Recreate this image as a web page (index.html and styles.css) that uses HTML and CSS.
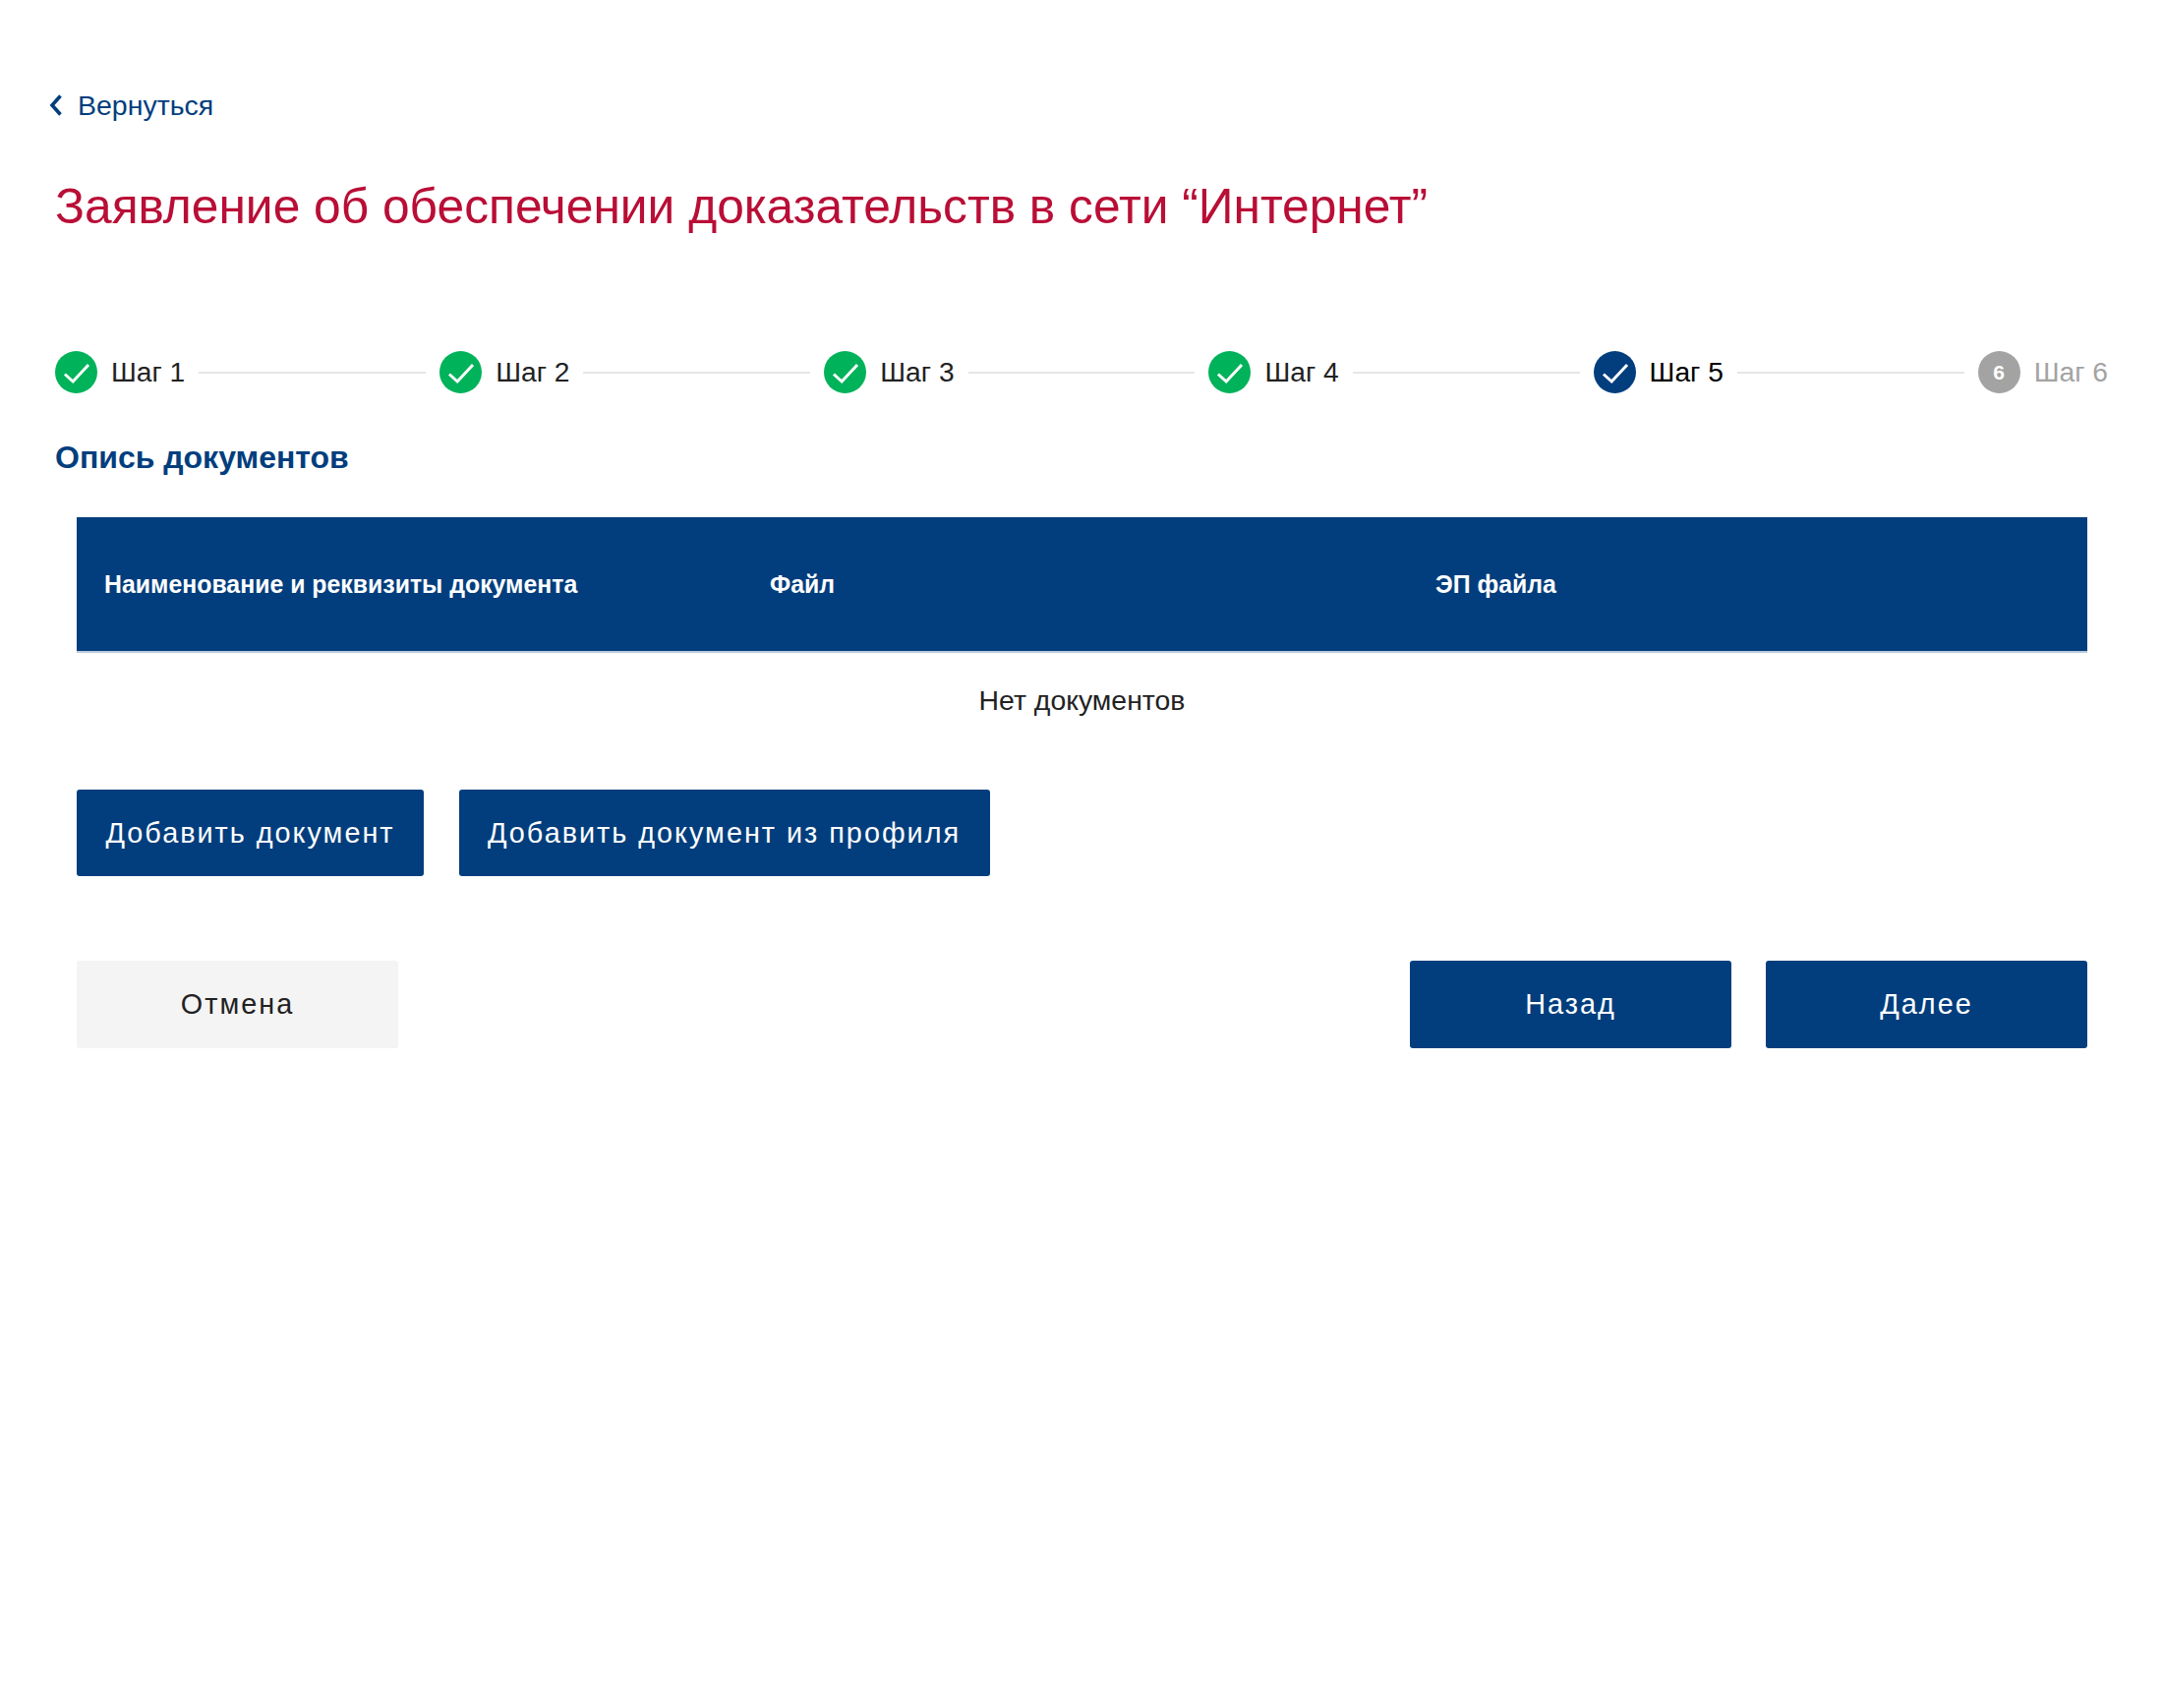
FILE: index.html
```html
<!DOCTYPE html>
<html lang="ru">
<head>
<meta charset="utf-8">
<title>Заявление об обеспечении доказательств</title>
<link rel="stylesheet" href="styles.css">
</head>
<body>
<main class="page">
  <a class="back" href="#">
    <svg class="back-icon" viewBox="0 0 14 22" width="14" height="22"><path d="M11.5 1.5 L3 11 L11.5 20.5" fill="none" stroke="currentColor" stroke-width="3.6"/></svg>
    <span>Вернуться</span>
  </a>
  <h1 class="title">Заявление об обеспечении доказательств в сети “Интернет”</h1>
  <ol class="steps">
    <li class="step done"><span class="dot"><svg viewBox="0 0 43 43" width="43" height="43"><path d="M10 23.5 L18.2 31 L34 14" fill="none" stroke="#fff" stroke-width="3"/></svg></span><span class="label">Шаг 1</span></li>
    <li class="line"></li>
    <li class="step done"><span class="dot"><svg viewBox="0 0 43 43" width="43" height="43"><path d="M10 23.5 L18.2 31 L34 14" fill="none" stroke="#fff" stroke-width="3"/></svg></span><span class="label">Шаг 2</span></li>
    <li class="line"></li>
    <li class="step done"><span class="dot"><svg viewBox="0 0 43 43" width="43" height="43"><path d="M10 23.5 L18.2 31 L34 14" fill="none" stroke="#fff" stroke-width="3"/></svg></span><span class="label">Шаг 3</span></li>
    <li class="line"></li>
    <li class="step done"><span class="dot"><svg viewBox="0 0 43 43" width="43" height="43"><path d="M10 23.5 L18.2 31 L34 14" fill="none" stroke="#fff" stroke-width="3"/></svg></span><span class="label">Шаг 4</span></li>
    <li class="line"></li>
    <li class="step current"><span class="dot"><svg viewBox="0 0 43 43" width="43" height="43"><path d="M10 23.5 L18.2 31 L34 14" fill="none" stroke="#fff" stroke-width="3"/></svg></span><span class="label">Шаг 5</span></li>
    <li class="line"></li>
    <li class="step todo"><span class="dot">6</span><span class="label">Шаг 6</span></li>
  </ol>
  <h2 class="subtitle">Опись документов</h2>
  <section class="content">
    <div class="thead">
      <div class="th">Наименование и реквизиты документа</div>
      <div class="th">Файл</div>
      <div class="th">ЭП файла</div>
    </div>
    <p class="empty">Нет документов</p>
    <div class="add-actions">
      <button class="btn primary" type="button">Добавить документ</button>
      <button class="btn primary" type="button">Добавить документ из профиля</button>
    </div>
    <div class="nav-actions">
      <button class="btn nav secondary" type="button">Отмена</button>
      <div class="nav-right">
        <button class="btn nav primary" type="button">Назад</button>
        <button class="btn nav primary" type="button">Далее</button>
      </div>
    </div>
  </section>
</main>
</body>
</html>
```
FILE: styles.css
```css
* { box-sizing: border-box; }
html, body { margin: 0; background: #fff; }
body { font-family: "Liberation Sans", Arial, sans-serif; color: #222; }
.page { padding: 90px 56px 0; min-height: 1737px; }

.back { display: flex; align-items: center; gap: 15px; color: #023e7d; text-decoration: none; font-size: 28.5px; line-height: 34px; margin-left: -6px; }
.back-icon { flex: none; }

.title { margin: 55px 0 0; font-size: 49.7px; line-height: 62px; font-weight: 400; color: #b90e36; }

.steps { list-style: none; display: flex; align-items: center; margin: 116px 0 0; padding: 0; }
.step { display: flex; align-items: center; gap: 14px; font-size: 28.2px; line-height: 43px; }
.dot { width: 43px; height: 43px; border-radius: 50%; display: flex; align-items: center; justify-content: center; color: #fff; font-size: 21px; font-weight: 700; flex: none; }
.done .dot { background: #00b25a; }
.current .dot { background: #023e7d; }
.current .label { color: #000; }
.todo .dot { background: #a3a3a3; }
.todo .label { color: #a3a3a3; }
.line { flex: 1; height: 2px; background: #e6e6e6; margin: 0 14px; }

.subtitle { margin: 45px 0 0; font-size: 32px; line-height: 40px; font-weight: 700; color: #023e7d; }

.content { padding: 0 21px 0 22px; margin-top: 41px; }
.thead { display: grid; grid-template-columns: repeat(3, 677px); height: 138px; align-items: center; background: #023e7d; padding: 0 28px; border-bottom: 2px solid #bccadb; color: #fff; }
.th { font-size: 24.85px; font-weight: 700; line-height: 30px; padding-top: 2px; }
.empty { margin: 0; padding-top: 30px; text-align: center; font-size: 28.4px; line-height: 36px; }

.btn { font-family: inherit; font-size: 28.8px; letter-spacing: 2px; border: 0; border-radius: 3px; cursor: pointer; height: 88px; padding: 0 29.5px; line-height: 36px; }
.primary { background: #023e7d; color: #fff; }
.secondary { background: #f4f4f4; color: #222; }
.nav { width: 327px; height: 89px; padding: 0 0 2px; }

.add-actions { display: flex; gap: 35.5px; margin-top: 73px; }
.nav-actions { display: flex; justify-content: space-between; margin-top: 86px; }
.nav-right { display: flex; gap: 35px; }
```
